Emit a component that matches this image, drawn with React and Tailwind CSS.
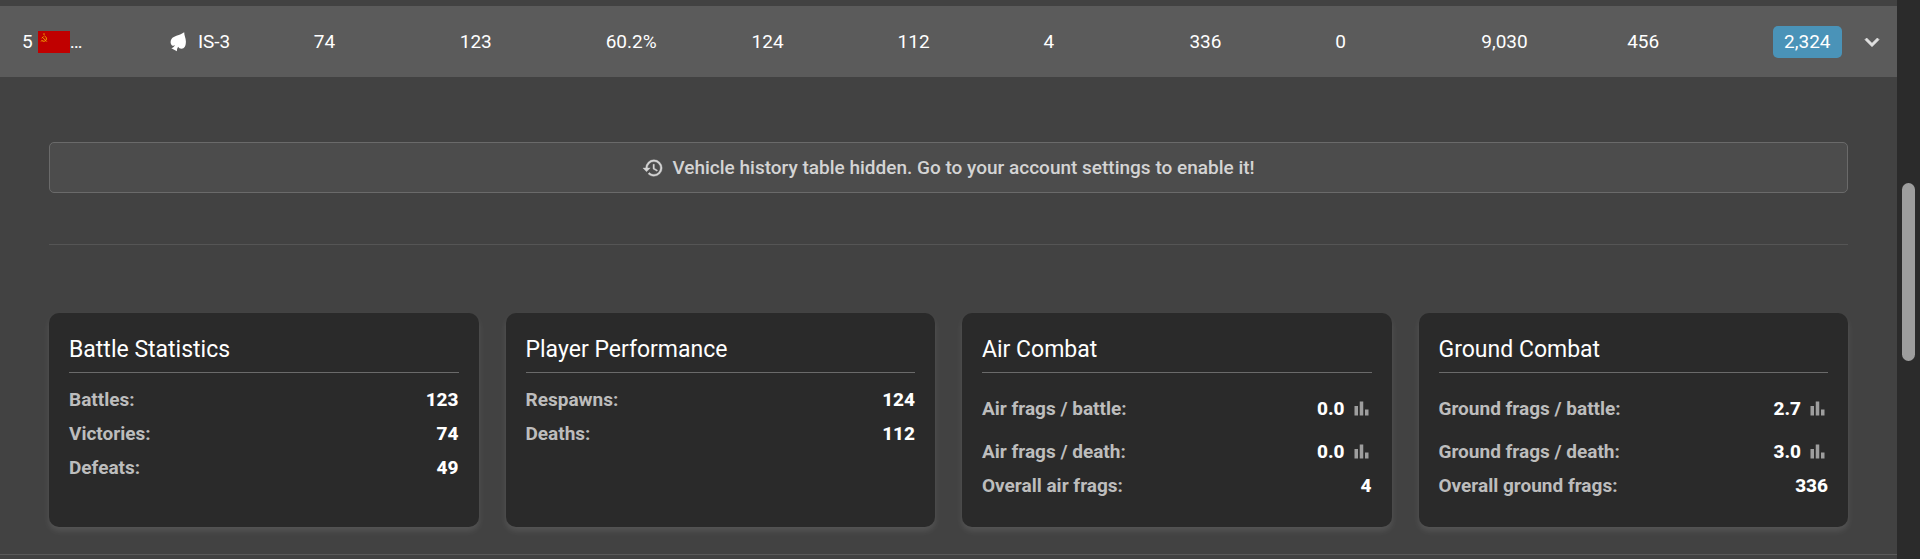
import { MdBarChart } from "react-icons/md"

const vehicle = {
  rank: 5,
  name: "IS-3",
  stats: ["74", "123", "60.2%", "124", "112", "4", "336", "0", "9,030", "456"],
  rating: "2,324",
}

const cards = [
  {
    title: "Battle Statistics",
    rows: [
      { label: "Battles:", value: "123" },
      { label: "Victories:", value: "74" },
      { label: "Defeats:", value: "49" },
    ],
  },
  {
    title: "Player Performance",
    rows: [
      { label: "Respawns:", value: "124" },
      { label: "Deaths:", value: "112" },
    ],
  },
  {
    title: "Air Combat",
    rows: [
      { label: "Air frags / battle:", value: "0.0", chart: true },
      { label: "Air frags / death:", value: "0.0", chart: true },
      { label: "Overall air frags:", value: "4" },
    ],
  },
  {
    title: "Ground Combat",
    rows: [
      { label: "Ground frags / battle:", value: "2.7", chart: true },
      { label: "Ground frags / death:", value: "3.0", chart: true },
      { label: "Overall ground frags:", value: "336" },
    ],
  },
]

function SovietFlag() {
  return (
    <svg viewBox="0 0 32 22" className="w-8 h-[22px] shrink-0" role="img" aria-label="USSR">
      <rect width="32" height="22" fill="#c00000" />
      <g fill="none" stroke="#f2a900" strokeWidth="0.9">
        <path d="M6.4 4.800c2 1 2.500 2.900 1.700 4.300-.9 1.500-3 1.500-4.300.4" />
        <path d="M3.700 7.200l1.800-1.700M4.600 6.400l4.200 4.200M4.200 9.200l-1.100 1.300" />
      </g>
      <path d="M6 1.900l.3.800h.8l-.6.500.2.800-.7-.5-.7.500.2-.8-.6-.5h.8z" fill="#f2a900" />
    </svg>
  )
}

function HeavyTankIcon() {
  return (
    <svg viewBox="0 0 16 20" className="w-4 h-5 shrink-0" fill="#fff" aria-hidden="true">
      <path d="M14.200 0.300C14.100 3.500 15.900 6 15.900 9.500C15.900 14 14.500 16.700 11.500 16.700C9.900 16.700 8.700 16 8.200 14.800C7.300 16 6.900 17.500 6.900 19.300L1.400 16.300C3 15.700 4.400 14.700 5.100 13.100C4.200 14 2.700 14.100 1.800 13.300C0.300 12 0.200 8.600 1.500 6.900C3.800 3.700 9.800 3.500 14.200 0.300Z" />
    </svg>
  )
}

function ChevronIcon() {
  return (
    <svg viewBox="0 0 24 24" className="w-7 h-7" fill="currentColor" stroke="currentColor" strokeWidth="0.6" aria-hidden="true">
      <path d="M7.410 8.580L12 13.170l4.590-4.590L18 10l-6 6-6-6z" />
    </svg>
  )
}

function HistoryIcon() {
  return (
    <svg viewBox="0 0 24 24" className="w-[22px] h-[22px]" fill="currentColor" stroke="currentColor" strokeWidth="0.4" aria-hidden="true">
      <path d="M13.500 8H12v5l4.280 2.540.72-1.210-3.500-2.080V8M13 3a9 9 0 0 0-9 9H1l3.960 4.030L9 12H6a7 7 0 0 1 7-7 7 7 0 0 1 7 7 7 7 0 0 1-7 7c-1.930 0-3.680-.79-4.940-2.060l-1.420 1.420C8.270 20 10.500 21 13 21a9 9 0 0 0 9-9 9 9 0 0 0-9-9" />
    </svg>
  )
}

function VehicleRow() {
  return (
    <table className="w-full table-fixed bg-[#5b5b5b] text-[19px] leading-6 text-white">
      <tbody>
        <tr className="h-[71px]">
          <td className="pl-[22px]">
            <div className="flex items-center gap-[5px]">
              <span>{vehicle.rank}</span>
              <span className="flex items-center">
                <SovietFlag />
                <span>…</span>
              </span>
            </div>
          </td>
          <td className="pl-6">
            <div className="flex items-center gap-3">
              <HeavyTankIcon />
              <span>{vehicle.name}</span>
            </div>
          </td>
          {vehicle.stats.map((stat, i) => (
            <td key={i} className="pl-[22px]">{stat}</td>
          ))}
          <td className="pl-[22px]">
            <div className="flex items-center gap-4">
              <span className="rounded-[5px] bg-[#4a93b8] px-[11px] py-1">{vehicle.rating}</span>
              <button type="button" aria-label="Toggle details" className="text-[#e0e0e0]">
                <ChevronIcon />
              </button>
            </div>
          </td>
        </tr>
      </tbody>
    </table>
  )
}

function StatCard({ title, rows }) {
  return (
    <article className="rounded-[10px] bg-[#2a2a2a] px-5 pt-[21px] pb-6 shadow-[0_4px_6px_rgba(255,255,255,0.1)]">
      <h3 className="mb-[10px] border-b border-[#6a6a6a] pb-[6px] text-[23px] leading-8 text-white">{title}</h3>
      <dl>
        {rows.map((row) => (
          <div
            key={row.label}
            className={`flex justify-between text-[19px] leading-[34px] ${row.chart ? "pt-[9px]" : ""}`}
          >
            <dt className="font-bold text-[#bdbdbd]">{row.label}</dt>
            <dd className="flex items-center font-extrabold text-white">
              {row.value}
              {row.chart && (
                <button type="button" aria-label={`Chart for ${row.label}`} className="ml-[6px] pb-[2px] text-[#9e9e9e]">
                  <MdBarChart className="w-[21px] h-[21px]" />
                </button>
              )}
            </dd>
          </div>
        ))}
      </dl>
    </article>
  )
}

export default function App() {
  return (
    <div className="flex min-h-screen bg-[#424242] font-[Roboto,sans-serif]">
      <main className="flex-1 pt-[6px]">
        <VehicleRow />
        <section className="border-b border-[#5a5a5a] px-[49px] pt-[65px] pb-[27px]">
          <div className="flex h-[51px] items-center justify-center gap-2 rounded-[5px] border border-[#6a6a6a] bg-[#4c4c4c] text-[19px] font-medium text-[#d4d4d4]">
            <HistoryIcon />
            <p className="pt-[2px]">Vehicle history table hidden. Go to your account settings to enable it!</p>
          </div>
          <hr className="mt-[51px] mb-[68px] border-[#555555]" />
          <div className="grid grid-cols-4 gap-[27px]">
            {cards.map((card) => (
              <StatCard key={card.title} {...card} />
            ))}
          </div>
        </section>
      </main>
      <div className="w-[23px] bg-[#2b2b2b] px-[5px] pt-[183px]">
        <div className="h-[178px] rounded-full bg-[#9e9e9e]" />
      </div>
    </div>
  )
}
